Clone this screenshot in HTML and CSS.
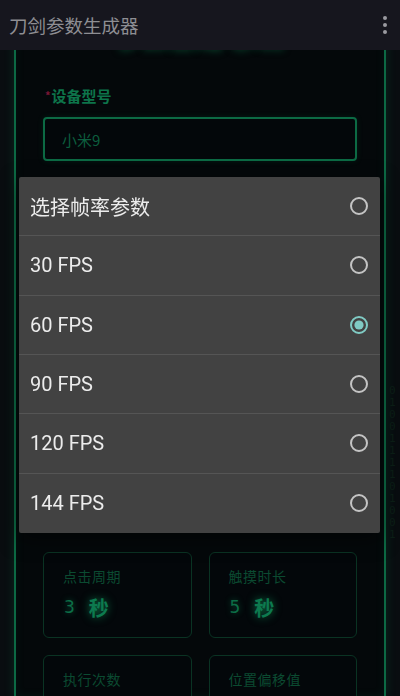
FILE: index.html
```html
<!DOCTYPE html>
<html lang="zh">
<head>
<meta charset="utf-8">
<title>刀剑参数生成器</title>
<link rel="stylesheet" href="styles.css">
</head>
<body>
<header class="appbar">
  <span class="appbar-title">刀剑参数生成器</span>
  <span class="menu"><i></i><i></i><i></i></span>
</header>

<div class="rain rain-r">0<br>1<br>0<br>0<br>1<br>1<br>1<br>1<br>0<br>1<br>0<br>0<br>1</div>

<main class="page">
  <section class="panel">
    <h1 class="panel-title">参数生成 系统</h1>

    <div class="field">
      <label class="label"><span class="req">*</span>设备型号</label>
      <div class="input">小米9</div>
    </div>

    <div class="covered" aria-hidden="true">
      <div class="covered-box"></div>
      <div class="covered-box"></div>
      <div class="covered-btn"></div>
    </div>

    <div class="stats">
      <div class="stat">
        <div class="stat-label">点击周期</div>
        <div class="stat-value"><span class="num">3</span><span class="unit">秒</span></div>
      </div>
      <div class="stat">
        <div class="stat-label">触摸时长</div>
        <div class="stat-value"><span class="num">5</span><span class="unit">秒</span></div>
      </div>
      <div class="stat">
        <div class="stat-label">执行次数</div>
      </div>
      <div class="stat">
        <div class="stat-label">位置偏移值</div>
      </div>
    </div>
  </section>
</main>

<div class="dialog">
  <div class="row"><span class="row-text cjk">选择帧率参数</span><svg class="radio" width="20" height="20" viewBox="0 0 20 20"><circle cx="10" cy="10" r="8" fill="none" stroke="#c4c4c4" stroke-width="2"/></svg></div>
  <div class="row"><span class="row-text">30 FPS</span><svg class="radio" width="20" height="20" viewBox="0 0 20 20"><circle cx="10" cy="10" r="8" fill="none" stroke="#c4c4c4" stroke-width="2"/></svg></div>
  <div class="row"><span class="row-text">60 FPS</span><svg class="radio" width="20" height="20" viewBox="0 0 20 20"><circle cx="10" cy="10" r="8" fill="none" stroke="#80cbc4" stroke-width="2"/><circle cx="10" cy="10" r="4.6" fill="#80cbc4"/></svg></div>
  <div class="row"><span class="row-text">90 FPS</span><svg class="radio" width="20" height="20" viewBox="0 0 20 20"><circle cx="10" cy="10" r="8" fill="none" stroke="#c4c4c4" stroke-width="2"/></svg></div>
  <div class="row"><span class="row-text">120 FPS</span><svg class="radio" width="20" height="20" viewBox="0 0 20 20"><circle cx="10" cy="10" r="8" fill="none" stroke="#c4c4c4" stroke-width="2"/></svg></div>
  <div class="row"><span class="row-text">144 FPS</span><svg class="radio" width="20" height="20" viewBox="0 0 20 20"><circle cx="10" cy="10" r="8" fill="none" stroke="#c4c4c4" stroke-width="2"/></svg></div>
</div>
</body>
</html>
```

FILE: styles.css
```css
* { box-sizing: border-box; }

html, body {
  margin: 0;
  padding: 0;
  height: 100%;
  overflow: hidden;
}

body {
  background: #090d10;
  font-family: "Noto Sans CJK SC", "Noto Sans", sans-serif;
  color: #0c6e47;
}

.appbar {
  position: fixed;
  top: 0;
  left: 0;
  right: 0;
  height: 50px;
  background: #16161e;
  display: flex;
  align-items: center;
  justify-content: space-between;
  padding: 0 12px 0 9px;
  z-index: 10;
}

.appbar-title {
  font-family: "Noto Sans CJK SC", sans-serif;
  font-size: 18.5px;
  color: #8e8e93;
}

.menu {
  display: flex;
  flex-direction: column;
  gap: 3px;
  align-items: center;
  width: 6px;
}
.menu i {
  display: block;
  width: 4px;
  height: 4px;
  border-radius: 50%;
  background: #9a9aa0;
}

.rain {
  position: absolute;
  font-family: "DejaVu Sans Mono", monospace;
  font-size: 11px;
  line-height: 12px;
  color: #0c1f17;
  text-align: center;
}
.rain-r {
  left: 389px;
  top: 385px;
}

.page {
  padding: 0 14px;
  height: 100%;
}

.panel {
  border-left: 2px solid #0c6a44;
  border-right: 2px solid #0c6a44;
  background: #04080a;
  box-shadow: 0 0 10px rgba(16, 180, 110, 0.18), inset 0 0 10px rgba(16, 180, 110, 0.08);
  padding: 18px 27px 0;
  height: 100%;
}

.panel-title {
  margin: 0;
  font-size: 26px;
  line-height: 36px;
  font-weight: 700;
  text-align: center;
  letter-spacing: 1px;
  color: #0f9a5e;
  text-shadow: 0 0 8px rgba(20, 200, 120, 0.5);
}

.field {
  margin-top: 31px;
}

.label {
  display: block;
  font-size: 15px;
  line-height: 20px;
  font-weight: 700;
  color: #0d744a;
  padding-left: 2px;
}
.req {
  color: #7a1636;
  font-size: 11px;
  margin-right: 1px;
  vertical-align: 2px;
}

.input {
  margin-top: 11px;
  height: 44px;
  border: 2px solid #0c6a44;
  border-radius: 4px;
  padding: 0 17px;
  display: flex;
  align-items: center;
  font-size: 15px;
  color: #0c5e3e;
  background: #03070a;
  box-shadow: 0 0 6px rgba(16, 180, 110, 0.12);
}

.covered {
  display: flex;
  flex-direction: column;
  gap: 24px;
  padding-top: 40px;
  height: 391px;
}
.covered-box {
  height: 44px;
  border: 2px solid #0c6a44;
  border-radius: 4px;
}
.covered-btn {
  height: 48px;
  border: 2px solid #0c6a44;
  border-radius: 4px;
}

.stats {
  display: grid;
  grid-template-columns: 1fr 1fr;
  gap: 17px;
}

.stat {
  height: 86px;
  border: 1px solid #0a3323;
  border-radius: 6px;
  padding: 13px 19px 0;
  background: #03070a;
}

.stat-label {
  font-size: 14px;
  line-height: 20px;
  color: #0b4a31;
  letter-spacing: 0.5px;
}

.stat-value {
  margin-top: 7px;
  height: 28px;
  display: flex;
  align-items: center;
  color: #0c6e47;
}
.num {
  font-family: "DejaVu Sans", sans-serif;
  font-size: 17px;
  padding-left: 1px;
  text-shadow: 0 0 6px rgba(20, 200, 120, 0.4);
}
.unit {
  margin-left: 14px;
  font-size: 20px;
  font-weight: 700;
  color: #0d7a4f;
  text-shadow: 0 0 8px rgba(20, 200, 120, 0.55);
}

.dialog {
  position: fixed;
  left: 19px;
  top: 177px;
  width: 361px;
  background: #424242;
  border-radius: 2px;
  box-shadow: 0 6px 20px rgba(0, 0, 0, 0.5);
  z-index: 20;
}

.row {
  height: 59.33px;
  display: flex;
  align-items: center;
  justify-content: space-between;
  padding: 0 11px;
  border-bottom: 1px solid #555555;
}
.row:last-child {
  border-bottom: none;
}

.row-text {
  font-family: Roboto, "Noto Sans CJK SC", sans-serif;
  font-size: 20px;
  color: #ececec;
}
.row-text.cjk {
  font-family: "Noto Sans CJK SC", sans-serif;
}

.radio {
  display: block;
}
```
